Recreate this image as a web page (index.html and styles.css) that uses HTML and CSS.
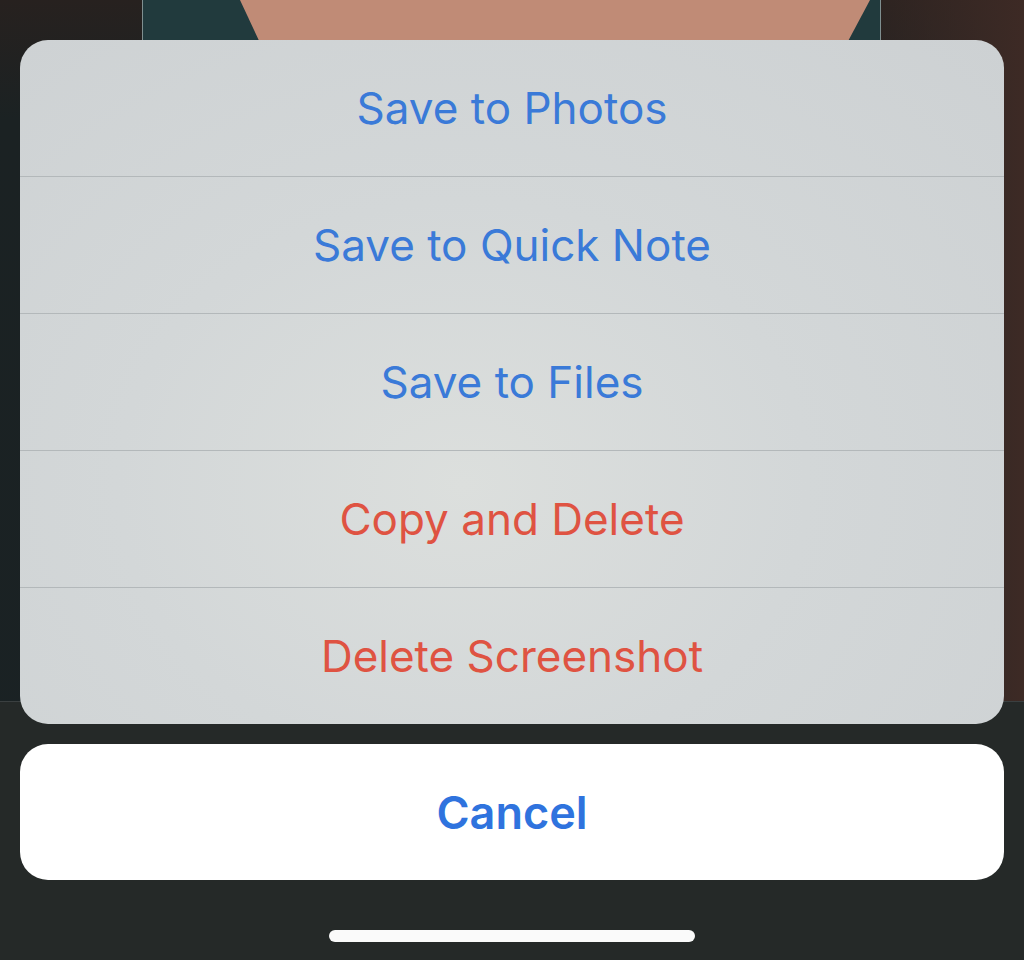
FILE: index.html
```html
<!DOCTYPE html>
<html lang="en">
<head>
    <meta charset="UTF-8">
    <meta name="viewport" content="width=device-width, initial-scale=1.0">
    <title>Screenshot Actions</title>
    <link rel="stylesheet" href="styles.css">
</head>
<body>
    <!-- screenshot preview sitting behind the action sheet -->
    <div class="backdrop">
        <div class="preview">
            <svg class="preview-art" width="737" height="60" viewBox="0 0 737 60">
                <polygon points="97,0 727,0 695,60 125,60" fill="#c08b76"/>
            </svg>
        </div>
        <div class="floor"></div>
    </div>

    <div class="sheet">
        <div class="actions">
            <button class="action">Save to Photos</button>
            <button class="action">Save to Quick Note</button>
            <button class="action">Save to Files</button>
            <button class="action destructive">Copy and Delete</button>
            <button class="action destructive">Delete Screenshot</button>
        </div>
        <button class="cancel">Cancel</button>
        <div class="home-indicator"></div>
    </div>
</body>
</html>
```

FILE: styles.css
```css
body {
    margin: 0;
    padding: 0;
    width: 1024px;
    height: 960px;
    overflow: hidden;
    position: relative;
    font-family: Inter, 'Liberation Sans', Arial, sans-serif;
    background: linear-gradient(180deg, #27211f 0px, #1b2223 120px, #1a2224 100%);
}

.backdrop {
    position: absolute;
    top: 0;
    left: 0;
    width: 100%;
    height: 100%;
    z-index: 0;
    background: linear-gradient(90deg, transparent 0%, transparent 80%, #3d2a25 100%);
}

.preview {
    position: absolute;
    top: 0;
    left: 142px;
    width: 737px;
    height: 701px;
    background-color: #213a3d;
    border-left: 1px solid #7f8f90;
    border-right: 1px solid #7f8f90;
    overflow: hidden;
}

.preview-art {
    display: block;
}

.floor {
    position: absolute;
    top: 701px;
    left: 0;
    width: 100%;
    height: 259px;
    background-color: #252928;
    border-top: 1px solid #3a3f40;
}

.sheet {
    position: relative;
    z-index: 1;
    display: flex;
    flex-direction: column;
    align-items: center;
    padding: 40px 20px 0;
}

.actions {
    width: 984px;
    display: flex;
    flex-direction: column;
    border-radius: 28px;
    overflow: hidden;
    background: radial-gradient(ellipse at 45% 65%, #dcdfdd 0%, #d3d7d8 45%, #cdd1d3 100%);
}

button {
    border: none;
    font-family: inherit;
    cursor: pointer;
}

.action {
    height: 137px;
    background: transparent;
    font-size: 44px;
    font-weight: 400;
    color: #3a7ad8;
    border-top: 1px solid #b3b8ba;
}

.action:first-child {
    height: 136px;
    border-top: none;
}

.action.destructive {
    color: #df5342;
}

.cancel {
    width: 984px;
    height: 136px;
    margin-top: 20px;
    border-radius: 28px;
    background-color: #ffffff;
    font-size: 45px;
    font-weight: 600;
    color: #2f73de;
}

.home-indicator {
    width: 366px;
    height: 12px;
    margin-top: 50px;
    border-radius: 6px;
    background-color: #fafafa;
}
```
